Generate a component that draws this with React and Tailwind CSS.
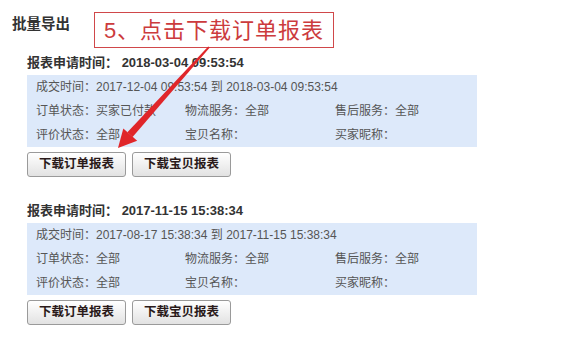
import React from "react";

const FONT = "font-['Liberation_Sans','Noto_Sans_CJK_SC',sans-serif]";

const REPORTS = [
  {
    applied: "2018-03-04 09:53:54",
    from: "2017-12-04 09:53:54",
    to: "2018-03-04 09:53:54",
    orderStatus: "买家已付款",
  },
  {
    applied: "2017-11-15 15:38:34",
    from: "2017-08-17 15:38:34",
    to: "2017-11-15 15:38:34",
    orderStatus: "全部",
  },
];

function Btn({ children }) {
  return (
    <button className="h-[25px] w-[99px] rounded-[3px] border border-[#9a9a9a] bg-gradient-to-b from-white to-[#e2e2e2] text-[12.5px] font-bold text-[#2a1a1a]">
      {children}
    </button>
  );
}

function Report({ r, className }) {
  return (
    <div className={"pl-[27px] " + className}>
      <div className="flex h-6 items-center text-[13px] font-bold text-[#333]">
        报表申请时间：&nbsp;{r.applied}
      </div>
      <div className="h-[72px] w-[450px] bg-[#dde9fa] pl-[9px] text-[12px] text-[#555]">
        <div className="flex h-6 items-center">
          成交时间：{r.from} 到 {r.to}
        </div>
        <div className="grid h-6 grid-cols-[149px_150px_1fr] items-center">
          <span>订单状态：{r.orderStatus}</span>
          <span>物流服务：全部</span>
          <span>售后服务：全部</span>
        </div>
        <div className="grid h-6 grid-cols-[149px_150px_1fr] items-center">
          <span>评价状态：全部</span>
          <span>宝贝名称：</span>
          <span>买家昵称：</span>
        </div>
      </div>
      <div className="mt-[5px] flex gap-[6px]">
        <Btn>下载订单报表</Btn>
        <Btn>下载宝贝报表</Btn>
      </div>
    </div>
  );
}

export default function App() {
  return (
    <div className={"relative h-[355px] w-[563px] overflow-hidden bg-white " + FONT}>
      <div className="flex items-start pl-3 pt-3">
        <div className="mt-[2px] text-[14.5px] font-bold text-[#333]">批量导出</div>
        <div className="ml-[24px] flex h-[36px] w-[240px] items-center justify-center border border-[#d0484a] bg-white text-[22px] tracking-[1px] text-[#cc3b3d]">
          5、点击下载订单报表
        </div>
      </div>
      <Report r={REPORTS[0]} className="mt-[3px]" />
      <Report r={REPORTS[1]} className="mt-[22px]" />
      <svg
        className="pointer-events-none absolute left-0 top-0"
        width="563"
        height="355"
        viewBox="0 0 563 355"
      >
        <polygon
          points="209.8,47.6 208.2,46.4 127.4,132.2 132.6,136.9"
          fill="#e0262a"
        />
        <polygon points="118,148 123.3,128.5 137.2,140.7" fill="#e0262a" />
      </svg>
    </div>
  );
}
